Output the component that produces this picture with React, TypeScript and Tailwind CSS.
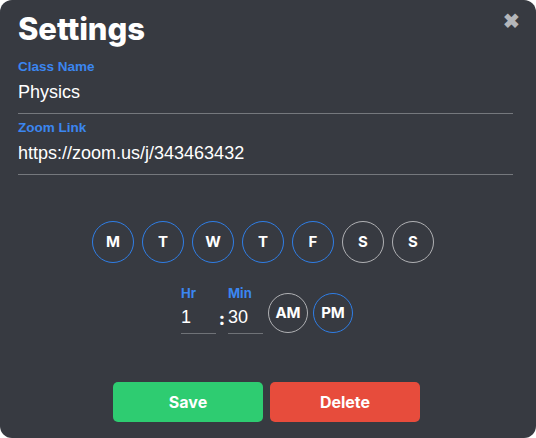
import React from "react";

const days = [
  { d: "M", on: true },
  { d: "T", on: true },
  { d: "W", on: true },
  { d: "T", on: true },
  { d: "F", on: true },
  { d: "S", on: false },
  { d: "S", on: false },
];

export default function App() {
  return (
    <div className="w-[536px] h-[438px] bg-white">
      <div className="relative w-[536px] h-[438px] bg-[#373a41] rounded-[12px] px-[18px] flex flex-col">
        <button className="absolute right-[16px] top-[10px] text-[#b4b6ba] [font-family:'Lato',sans-serif] font-black text-[20px] leading-none">
          ✖
        </button>
        <h1 className="mt-[11px] text-white [font-family:'Inter',sans-serif] font-extrabold text-[31px] leading-[36px] tracking-[-0.1px]">
          Settings
        </h1>
        <label className="mt-[12px] text-[#3b86f0] [font-family:'Liberation_Sans',Arial,sans-serif] font-bold text-[13.5px] leading-[16px]">
          Class Name
        </label>
        <div className="mt-[6px] pr-[5px]">
          <div className="text-white [font-family:'Liberation_Sans',Arial,sans-serif] text-[18px] leading-[22px] pb-[10px] border-b border-[#75787d]">
            Physics
          </div>
        </div>
        <label className="mt-[6px] text-[#3b86f0] [font-family:'Liberation_Sans',Arial,sans-serif] font-bold text-[13.5px] leading-[16px]">
          Zoom Link
        </label>
        <div className="mt-[6px] pr-[5px]">
          <div className="text-white [font-family:'Liberation_Sans',Arial,sans-serif] text-[18px] leading-[22px] pb-[10px] border-b border-[#75787d]">
            https://zoom.us/j/343463432
          </div>
        </div>
        <div className="mt-[46px] flex justify-center gap-[8px] pr-[10px]">
          {days.map((x, i) => (
            <div
              key={i}
              className={`w-[42px] h-[42px] rounded-full border flex items-center justify-center text-white [font-family:'Inter',sans-serif] font-bold text-[15px] ${
                x.on ? "border-[#2f7ee6]" : "border-[#b0b1b4]"
              }`}
            >
              {x.d}
            </div>
          ))}
        </div>
        <div className="mt-[22px] flex justify-center items-end pr-[2px]">
          <div className="flex flex-col w-[35px]">
            <span className="text-[#3b86f0] [font-family:'Inter',sans-serif] font-bold text-[13px] leading-[16px]">Hr</span>
            <span className="mt-[5px] text-white [font-family:'Liberation_Sans',Arial,sans-serif] text-[18px] leading-[22px] pb-[5px] border-b border-[#6f7277]">1</span>
          </div>
          <span className="w-[12px] text-center text-white [font-family:'Inter',sans-serif] font-extrabold text-[18px] leading-[22px] mb-[4px]">:</span>
          <div className="flex flex-col w-[35px]">
            <span className="text-[#3b86f0] [font-family:'Inter',sans-serif] font-bold text-[13px] leading-[16px]">Min</span>
            <span className="mt-[5px] text-white [font-family:'Liberation_Sans',Arial,sans-serif] text-[18px] leading-[22px] pb-[5px] border-b border-[#6f7277]">30</span>
          </div>
          <div className="ml-[5px] mb-[1px] flex gap-[5px]">
            <div className="w-[40px] h-[40px] rounded-full border border-[#b0b1b4] flex items-center justify-center text-white [font-family:'Inter',sans-serif] font-bold text-[15px]">
              AM
            </div>
            <div className="w-[40px] h-[40px] rounded-full border border-[#2f7ee6] flex items-center justify-center text-white [font-family:'Inter',sans-serif] font-bold text-[15px]">
              PM
            </div>
          </div>
        </div>
        <div className="mt-[48px] flex justify-center gap-[7px] pr-[3px]">
          <button className="w-[150px] h-[40px] rounded-[5px] bg-[#2ecc71] text-white [font-family:'Inter',sans-serif] font-bold text-[16px]">
            Save
          </button>
          <button className="w-[150px] h-[40px] rounded-[5px] bg-[#e74c3c] text-white [font-family:'Inter',sans-serif] font-bold text-[16px]">
            Delete
          </button>
        </div>
      </div>
    </div>
  );
}
